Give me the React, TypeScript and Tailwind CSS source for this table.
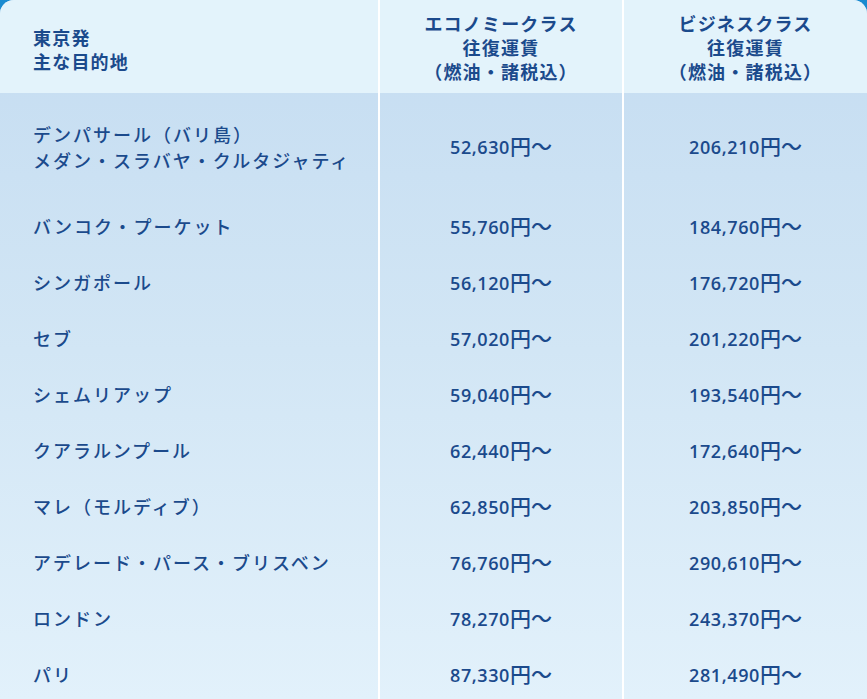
const rows: { city: string[]; eco: string; biz: string }[] = [
  { city: ["デンパサール（バリ島）", "メダン・スラバヤ・クルタジャティ"], eco: "52,630", biz: "206,210" },
  { city: ["バンコク・プーケット"], eco: "55,760", biz: "184,760" },
  { city: ["シンガポール"], eco: "56,120", biz: "176,720" },
  { city: ["セブ"], eco: "57,020", biz: "201,220" },
  { city: ["シェムリアップ"], eco: "59,040", biz: "193,540" },
  { city: ["クアラルンプール"], eco: "62,440", biz: "172,640" },
  { city: ["マレ（モルディブ）"], eco: "62,850", biz: "203,850" },
  { city: ["アデレード・パース・ブリスベン"], eco: "76,760", biz: "290,610" },
  { city: ["ロンドン"], eco: "78,270", biz: "243,370" },
  { city: ["パリ"], eco: "87,330", biz: "281,490" },
];

const jp = "font-['Noto_Sans_CJK_JP',sans-serif]";
const num = "font-['Open_Sans','Noto_Sans_CJK_JP',sans-serif]";

const Price = ({ v }: { v: string }) => (
  <span className={`${num} text-[18px] font-semibold tracking-[0.6px]`}>
    {v}
    <span className={`${jp} text-[21px] font-medium tracking-[0px]`}>円〜</span>
  </span>
);

export default function App() {
  return (
    <div className="w-[867px] h-[699px] overflow-hidden bg-[#1a8bd0]">
      <div className="h-full rounded-t-[14px] overflow-hidden bg-gradient-to-b from-[#c4dcf1] via-[#d2e6f5] to-[#e2f1fb] text-[#1b4a8c]">
        <div className="grid grid-cols-[380px_244px_243px] h-[93px] bg-[#e3f3fb]">
          <div className={`${jp} font-bold text-[18px] leading-[24px] tracking-[1.2px] pl-[33px] flex flex-col justify-center pt-[4px] border-r-2 border-white`}>
            <span>東京発</span>
            <span>主な目的地</span>
          </div>
          <div className={`${jp} font-bold text-[18px] leading-[24px] tracking-[1.2px] flex flex-col items-center justify-center border-r-2 border-white`}>
            <span>エコノミークラス</span>
            <span>往復運賃</span>
            <span>（燃油・諸税込）</span>
          </div>
          <div className={`${jp} font-bold text-[18px] leading-[24px] tracking-[1.2px] flex flex-col items-center justify-center`}>
            <span>ビジネスクラス</span>
            <span>往復運賃</span>
            <span>（燃油・諸税込）</span>
          </div>
        </div>
        {rows.map((r, i) => (
          <div
            key={i}
            className={`grid grid-cols-[380px_244px_243px] ${i === 0 ? "h-[105px]" : "h-[56px]"}`}
          >
            <div
              className={`${jp} font-medium text-[18px] leading-[26px] tracking-[2px] pl-[33px] flex flex-col justify-center border-r-2 border-white ${i === 0 ? "pt-[2px]" : ""}`}
            >
              {r.city.map((c) => (
                <span key={c}>{c}</span>
              ))}
            </div>
            <div className="flex items-center justify-center border-r-2 border-white">
              <Price v={r.eco} />
            </div>
            <div className="flex items-center justify-center">
              <Price v={r.biz} />
            </div>
          </div>
        ))}
      </div>
    </div>
  );
}
